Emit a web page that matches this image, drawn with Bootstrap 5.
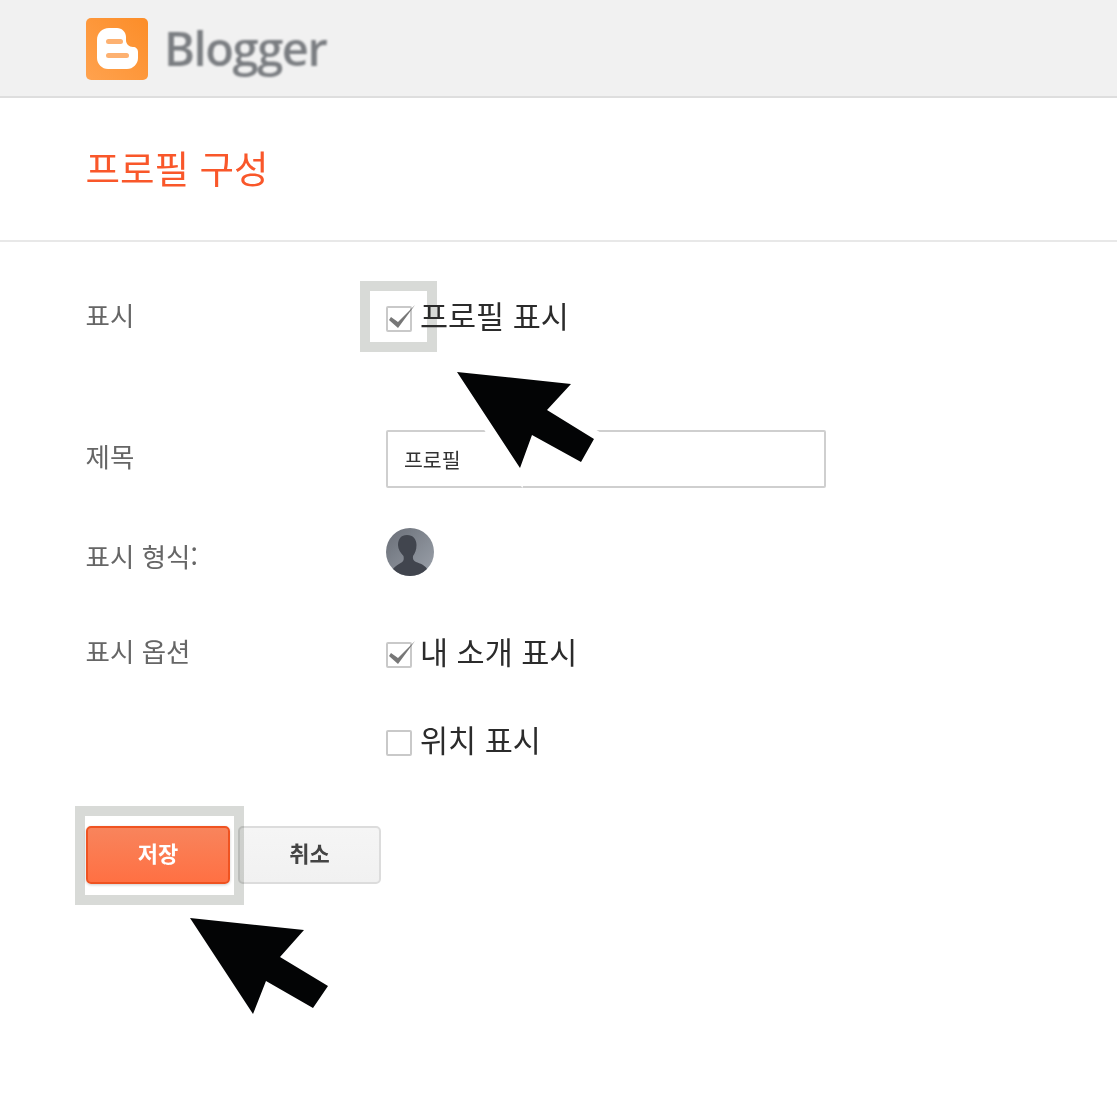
<!DOCTYPE html>
<html lang="ko">
<head>
    <meta charset="UTF-8">
    <meta name="viewport" content="width=device-width, initial-scale=1.0">
    <title>프로필 구성</title>
    <link rel="stylesheet" href="https://cdn.jsdelivr.net/npm/bootstrap@5.3.0/dist/css/bootstrap.min.css">
    <style>
        body { font-family: "Noto Sans CJK KR", "Liberation Sans", sans-serif; background: #fff; }
        .page-wrap { height: 1098px; overflow: hidden; }
        .top-bar { height: 98px; background: #f1f1f1; border-bottom: 2px solid #dedede; padding-left: 86px; padding-top: 18px; gap: 16px; }
        .logo-mark { filter: blur(.5px); }
        .logo-name { font-family: "Open Sans", sans-serif; font-weight: 600; font-size: 47px; letter-spacing: -1.4px; line-height: 60px; color: #7a7d81; filter: blur(1px); }
        .title-bar { height: 144px; padding: 0 0 4px 85.5px; border-bottom: 2px solid #e8e8e8; }
        .title-text { font-size: 37.5px; font-weight: 400; line-height: 1; color: #f9572a; margin: 0; }
        .form-body { padding-left: 86px; }
        .form-line { min-height: 48px; }
        .line-show { margin-top: 50px; }
        .line-title { margin-top: 90px; }
        .line-avatar { margin-top: 40px; }
        .line-about { margin-top: 52px; }
        .line-place { margin-top: 40px; }
        .form-key { width: 300px; flex: none; font-size: 26.5px; color: #666; line-height: 1; margin-bottom: 2px; margin-left: -.5px; margin-right: .5px; }
        .key-title { margin-bottom: 5px; }
        .key-low { padding-top: 15px; }
        .title-input.form-control { width: 440px; height: 58px; border: 2px solid #cfcfcf; border-radius: 2px; font-size: 20.5px; color: #333; padding: 0 16px; }
        .tick-wrap { width: 26px; height: 26px; flex: none; margin-right: 8px; top: 3px; }
        .tick-wrap .form-check-input { width: 26px; height: 26px; margin: 0; float: none; display: block; border: 2px solid #c9c9c9; border-radius: 2px; background-color: #fff; background-image: none; box-shadow: none; }
        .tick-mark { left: 1px; top: -5px; filter: blur(.5px); }
        .tick-text { font-size: 30.5px; line-height: 1; color: #2b2b2b; margin-bottom: 2px; }
        .mark-box { border: 10px solid #d8dad7; mix-blend-mode: multiply; }
        .mark-show { left: -26px; top: -25px; width: 77px; height: 71px; }
        .mark-save { left: -11px; top: -20px; width: 169px; height: 99px; }
        .btn-line { margin-top: 62px; gap: 8px; }
        .btn.act-btn { width: 144px; height: 58px; font-size: 22px; font-weight: 700; line-height: 1; border-radius: 5px; padding: 0 0 6px; }
        .act-save.btn { color: #fff; background: linear-gradient(#f8845c, #ff7043); border: 2px solid #ef5321; box-shadow: 0 1px 3px rgba(0,0,0,.2); }
        .act-cancel.btn { width: 143px; color: #444; background: linear-gradient(#f5f5f5, #f1f1f1); border: 2px solid #dcdcdc; }
        .arrow-layer { left: 0; top: 0; pointer-events: none; }
    </style>
</head>
<body class="m-0">
    <div class="page-wrap position-relative">
        <div class="top-bar d-flex">
            <svg class="logo-mark" width="62" height="62" viewBox="0 0 62 62">
                <defs>
                    <linearGradient id="logoFill" x1="0" y1="1" x2="1" y2="0">
                        <stop offset="0" stop-color="#ffa24e"/>
                        <stop offset="1" stop-color="#fc8d28"/>
                    </linearGradient>
                </defs>
                <rect width="62" height="62" rx="5" fill="url(#logoFill)"/>
                <path d="M23 10h8c5 0 9 4 9 9v3c0 4 3 7 7 7 3 0 5 2 5 5v6c0 6-5 11-11 11H22c-6 0-11-5-11-11V22c0-7 5-12 12-12z" fill="#fff"/>
                <rect x="20" y="21" width="17" height="5" rx="2.5" fill="#fdb171"/>
                <rect x="20" y="35" width="23" height="5" rx="2.5" fill="#fdb171"/>
            </svg>
            <div class="logo-name">Blogger</div>
        </div>

        <div class="title-bar d-flex align-items-center">
            <h1 class="title-text">프로필 구성</h1>
        </div>

        <div class="form-body">
            <div class="form-line line-show d-flex align-items-center">
                <div class="form-key">표시</div>
                <label class="d-flex align-items-center">
                    <span class="tick-wrap position-relative">
                        <span class="mark-box mark-show position-absolute"></span>
                        <input class="form-check-input" type="checkbox" checked>
                        <svg class="tick-mark position-absolute" width="30" height="28" viewBox="0 0 30 28"><polygon points="2,19 4,16 11,21 28,4 11,27" fill="#777"/></svg>
                    </span>
                    <span class="tick-text position-relative">프로필 표시</span>
                </label>
            </div>

            <div class="form-line line-title d-flex align-items-center">
                <div class="form-key key-title">제목</div>
                <input class="title-input form-control" type="text" value="프로필">
            </div>

            <div class="form-line line-avatar d-flex align-items-start">
                <div class="form-key key-low">표시 형식:</div>
                <svg width="48" height="48" viewBox="0 0 48 48">
                    <defs>
                        <linearGradient id="faceBg" x1="0" y1="0" x2="1" y2="1">
                            <stop offset="0" stop-color="#696e77"/>
                            <stop offset="1" stop-color="#9ca2ab"/>
                        </linearGradient>
                        <clipPath id="faceClip"><circle cx="24" cy="24" r="24"/></clipPath>
                    </defs>
                    <circle cx="24" cy="24" r="24" fill="url(#faceBg)"/>
                    <g clip-path="url(#faceClip)" fill="#41454e">
                        <path d="M21 7c6 0 9.500 4 9.500 10 0 5-1.500 8-3.500 11-.5 3 .5 5 3 6 4 1.500 9 3 11 7l-3 7H9l-2-7c2-3 6-5 8.500-6.500 2.500-1.500 2.500-3.500 2-6.500-3-3-5.500-7-5.500-11 0-6 3-10 9-10z"/>
                    </g>
                </svg>
            </div>

            <div class="form-line line-about d-flex align-items-center">
                <div class="form-key">표시 옵션</div>
                <label class="d-flex align-items-center">
                    <span class="tick-wrap position-relative">
                        <input class="form-check-input" type="checkbox" checked>
                        <svg class="tick-mark position-absolute" width="30" height="28" viewBox="0 0 30 28"><polygon points="2,19 4,16 11,21 28,4 11,27" fill="#777"/></svg>
                    </span>
                    <span class="tick-text">내 소개 표시</span>
                </label>
            </div>

            <div class="form-line line-place d-flex align-items-center">
                <div class="form-key"></div>
                <label class="d-flex align-items-center">
                    <span class="tick-wrap position-relative">
                        <input class="form-check-input" type="checkbox">
                    </span>
                    <span class="tick-text">위치 표시</span>
                </label>
            </div>

            <div class="btn-line d-flex">
                <div class="position-relative">
                    <span class="mark-box mark-save position-absolute"></span>
                    <button class="btn act-btn act-save position-relative" type="button">저장</button>
                </div>
                <button class="btn act-btn act-cancel" type="button">취소</button>
            </div>
        </div>

        <svg class="arrow-layer position-absolute" width="1117" height="1098" viewBox="0 0 1117 1098">
            <polygon points="457,372 571,384 547,410 594,439 581,462 532,435 520,468" fill="#030405" stroke="#fff" stroke-width="18" stroke-miterlimit="4" paint-order="stroke"/>
            <polygon points="190,918 304,930 280,957 328,986 313,1008 266,981 253,1014" fill="#030405"/>
        </svg>
    </div>
</body>
</html>
